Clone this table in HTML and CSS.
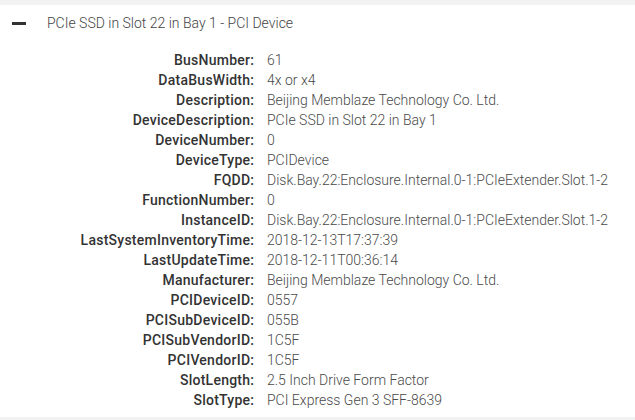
FILE: index.html
```html
<!DOCTYPE html>
<html>
<head>
<meta charset="utf-8">
<link rel="stylesheet" href="styles.css">
</head>
<body>
<div class="band"></div>
<div class="header">
  <span class="minus"></span>
  <span class="title">PCIe SSD in Slot 22 in Bay 1 - PCI Device</span>
</div>
<div class="props">
  <div class="k">BusNumber:</div><div class="v">61</div>
  <div class="k">DataBusWidth:</div><div class="v">4x or x4</div>
  <div class="k">Description:</div><div class="v">Beijing Memblaze Technology Co. Ltd.</div>
  <div class="k">DeviceDescription:</div><div class="v">PCIe SSD in Slot 22 in Bay 1</div>
  <div class="k">DeviceNumber:</div><div class="v">0</div>
  <div class="k">DeviceType:</div><div class="v">PCIDevice</div>
  <div class="k">FQDD:</div><div class="v">Disk.Bay.22:Enclosure.Internal.0-1:PCIeExtender.Slot.1-2</div>
  <div class="k">FunctionNumber:</div><div class="v">0</div>
  <div class="k">InstanceID:</div><div class="v">Disk.Bay.22:Enclosure.Internal.0-1:PCIeExtender.Slot.1-2</div>
  <div class="k">LastSystemInventoryTime:</div><div class="v">2018-12-13T17:37:39</div>
  <div class="k">LastUpdateTime:</div><div class="v">2018-12-11T00:36:14</div>
  <div class="k">Manufacturer:</div><div class="v">Beijing Memblaze Technology Co. Ltd.</div>
  <div class="k">PCIDeviceID:</div><div class="v">0557</div>
  <div class="k">PCISubDeviceID:</div><div class="v">055B</div>
  <div class="k">PCISubVendorID:</div><div class="v">1C5F</div>
  <div class="k">PCIVendorID:</div><div class="v">1C5F</div>
  <div class="k">SlotLength:</div><div class="v">2.5 Inch Drive Form Factor</div>
  <div class="k">SlotType:</div><div class="v">PCI Express Gen 3 SFF-8639</div>
</div>
<div class="band bottom"></div>
</body>
</html>
```
FILE: styles.css
```css
html, body {
  margin: 0;
  padding: 0;
  background: #ffffff;
  font-family: Roboto, "Liberation Sans", sans-serif;
  width: 635px;
  height: 420px;
  overflow: hidden;
}
.band {
  height: 5px;
  background: #f2f2f2;
}
.band.bottom {
  height: 4px;
  margin-top: 7px;
}
.header {
  display: flex;
  align-items: center;
  height: 36px;
  padding-left: 12px;
}
.minus {
  width: 14px;
  height: 3px;
  background: #333;
  margin-right: 21px;
}
.title {
  font-size: 14px;
  color: #444;
  font-weight: 300;
}
.props {
  display: grid;
  grid-template-columns: 254px 1fr;
  column-gap: 13px;
  grid-auto-rows: 20px;
  margin-top: 9px;
  font-size: 14px;
  line-height: 20px;
}
.k {
  text-align: right;
  font-weight: 500;
  color: #333;
  letter-spacing: 0.25px;
  margin-right: -0.25px;
}
.v {
  font-weight: 300;
  color: #4a4a4a;
  white-space: nowrap;
}
```
